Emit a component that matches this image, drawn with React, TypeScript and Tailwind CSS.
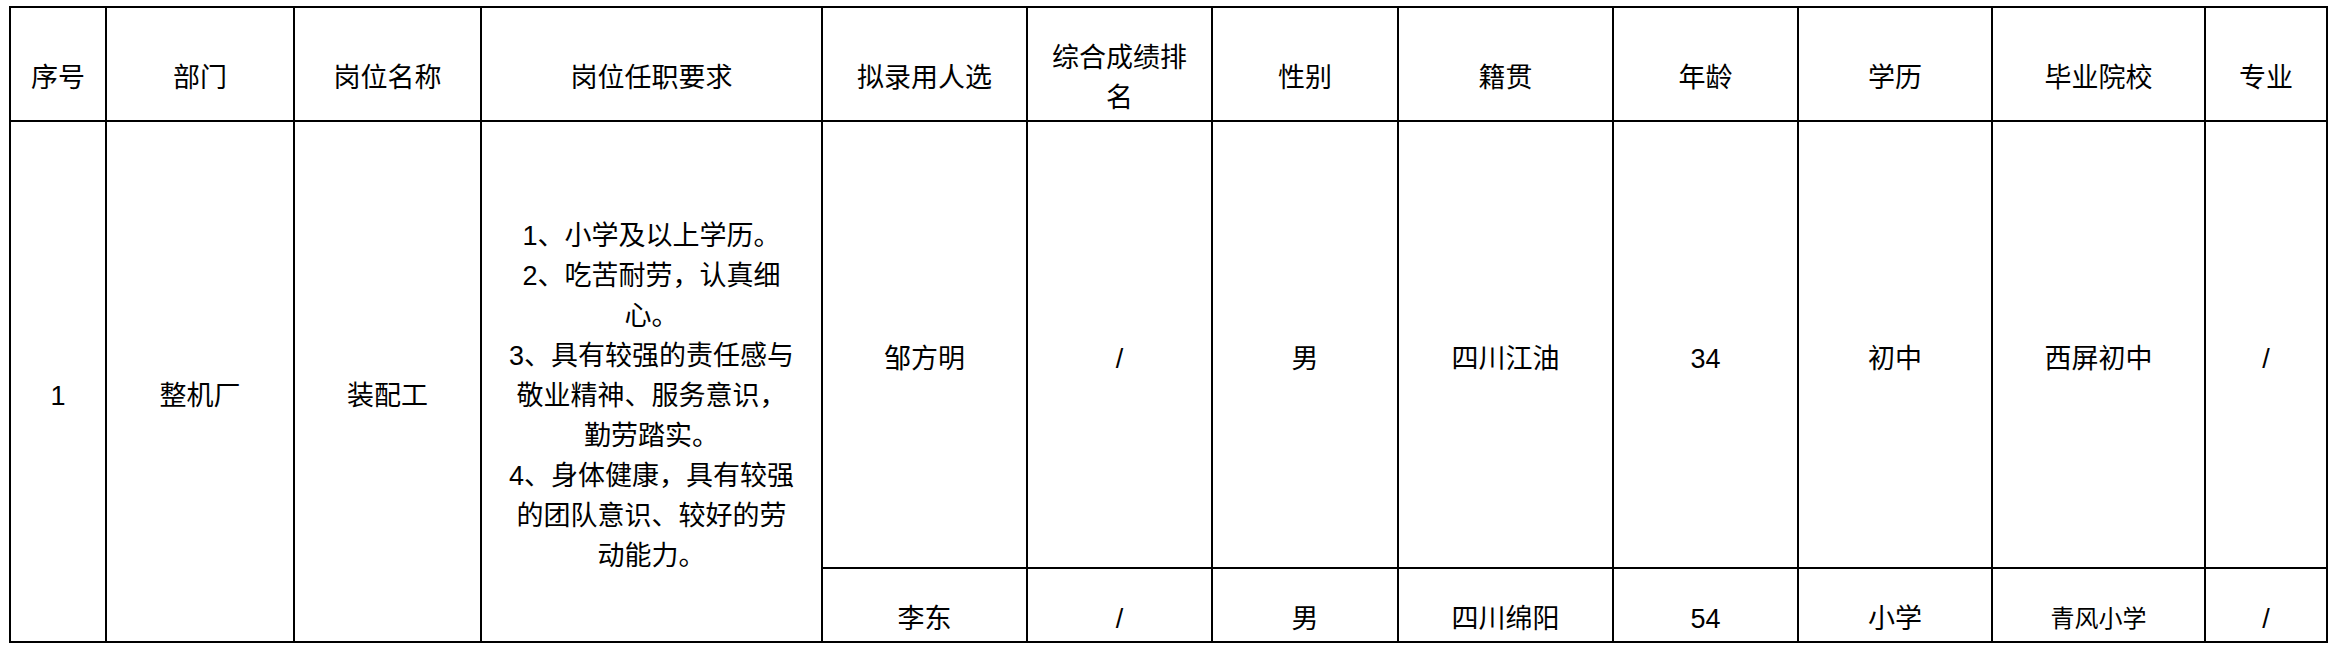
import React from "react";

const headers = [
  "序号",
  "部门",
  "岗位名称",
  "岗位任职要求",
  "拟录用人选",
  "综合成绩排名",
  "性别",
  "籍贯",
  "年龄",
  "学历",
  "毕业院校",
  "专业",
];

const people = [
  ["邹方明", "/", "男", "四川江油", "34", "初中", "西屏初中", "/"],
  ["李东", "/", "男", "四川绵阳", "54", "小学", "青风小学", "/"],
];

const requirements = [
  "1、小学及以上学历。",
  "2、吃苦耐劳，认真细心。",
  "3、具有较强的责任感与敬业精神、服务意识，勤劳踏实。",
  "4、身体健康，具有较强的团队意识、较好的劳动能力。",
];

const serif = "font-['Liberation_Serif','Noto_Sans_CJK_SC',serif]";
const sans = "font-['Liberation_Sans','Noto_Sans_CJK_SC',sans-serif]";

function Cell({
  children,
  className = "",
}: {
  children: React.ReactNode;
  className?: string;
}) {
  return (
    <div
      className={`bg-white flex items-center justify-center text-center pt-[28px] text-black leading-[40px] ${className}`}
    >
      {children}
    </div>
  );
}

export default function App() {
  return (
    <div className="min-h-[653px] w-[2338px] bg-white pt-[6px] pl-[9px]">
      <div className="grid w-fit bg-black p-[2px] gap-[2px] grid-cols-[94px_186px_185px_339px_203px_183px_184px_213px_183px_192px_211px_120px] grid-rows-[112px_445px_72px]">
        {headers.map((h, i) => (
          <Cell
            key={h}
            className={`${serif} text-[27px] ${i === 0 ? "px-[4px]" : "px-[24px]"}`}
          >
            {h}
          </Cell>
        ))}

        <Cell className={`${sans} text-[27px] row-span-2 px-[4px]`}>1</Cell>
        <Cell className={`${sans} text-[27px] row-span-2 px-[24px]`}>整机厂</Cell>
        <Cell className={`${sans} text-[27px] row-span-2 px-[24px]`}>装配工</Cell>
        <Cell className={`${sans} text-[27px] row-span-2 px-[24px]`}>
          <div>
            {requirements.map((r) => (
              <div key={r}>{r}</div>
            ))}
          </div>
        </Cell>

        {people[0].map((v, i) => (
          <Cell key={`a${i}`} className={`${sans} text-[27px] px-[24px]`}>
            {v}
          </Cell>
        ))}
        {people[1].map((v, i) => (
          <Cell
            key={`b${i}`}
            className={`${sans} px-[24px] ${i === 6 ? "text-[24px]" : "text-[27px]"}`}
          >
            {v}
          </Cell>
        ))}
      </div>
    </div>
  );
}
